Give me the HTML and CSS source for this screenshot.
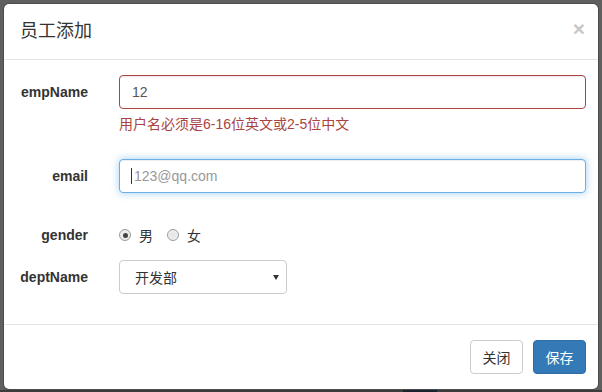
FILE: index.html
```html
<!DOCTYPE html>
<html lang="zh-CN">
<head>
<meta charset="utf-8">
<title>员工添加</title>
<link rel="stylesheet" href="styles.css">
</head>
<body>
<div class="modal">
  <div class="modal-header">
    <span class="close">×</span>
    <h4 class="modal-title">员工添加</h4>
  </div>
  <div class="modal-body">
    <form class="form">
      <div class="form-group has-error">
        <label class="control-label">empName</label>
        <div class="control">
          <input type="text" class="form-control" value="12">
          <span class="help-block">用户名必须是6-16位英文或2-5位中文</span>
        </div>
      </div>
      <div class="form-group">
        <label class="control-label">email</label>
        <div class="control">
          <div class="input-wrap">
            <input type="text" class="form-control focus" placeholder="123@qq.com">
          </div>
          <span class="help-block empty"></span>
        </div>
      </div>
      <div class="form-group">
        <label class="control-label">gender</label>
        <div class="control radios">
          <label class="radio-inline"><input type="radio" name="gender" checked><span>男</span></label>
          <label class="radio-inline"><input type="radio" name="gender"><span>女</span></label>
        </div>
      </div>
      <div class="form-group">
        <label class="control-label">deptName</label>
        <div class="control">
          <div class="select-wrap">
            <select class="form-select">
              <option>开发部</option>
              <option>测试部</option>
            </select>
          </div>
        </div>
      </div>
    </form>
  </div>
  <div class="modal-footer">
    <button type="button" class="btn btn-default">关闭</button>
    <button type="button" class="btn btn-primary">保存</button>
  </div>
</div>
<div class="backdrop-bottom"><div class="under-btn"></div></div>
</body>
</html>
```

FILE: styles.css
```css
* { box-sizing: border-box; }
html, body { margin: 0; padding: 0; height: 100%; overflow: hidden; }
body {
  background: #5f5f5f;
  font-family: "Liberation Sans", Arial, "Noto Sans CJK SC", sans-serif;
  font-size: 14px;
  line-height: 20px;
  color: #333;
  padding-top: 3px;
}
.modal {
  margin-left: 3px;
  width: 596px;
  height: 387px;
  background: #fff;
  border: 1px solid rgba(0,0,0,.2);
  border-radius: 6px;
  background-clip: padding-box;
}
.modal-header {
  height: 56px;
  padding: 15px 13px 15px 16px;
  border-bottom: 1px solid #e5e5e5;
}
.modal-title {
  margin: 0;
  font-size: 18px;
  line-height: 25px;
  font-weight: normal;
  color: #333;
}
.close {
  float: right;
  font-size: 21px;
  font-weight: bold;
  line-height: 1;
  color: #c8c8c8;
  margin-top: -1px;
}
.modal-body {
  padding: 15px 12px 15px 0;
}
.form-group {
  display: grid;
  grid-template-columns: 84px 1fr;
  column-gap: 31px;
  margin-bottom: 15px;
}
.control-label {
  text-align: right;
  font-weight: bold;
  padding-top: 7px;
  line-height: 20px;
  color: #333;
}
.form-control, .form-select {
  display: block;
  width: 100%;
  height: 34px;
  padding: 6px 12px;
  font-family: "Liberation Sans", Arial, "Noto Sans CJK SC", sans-serif;
  font-size: 14px;
  line-height: 20px;
  color: #555;
  background: #fff;
  border: 1px solid #ccc;
  border-radius: 4px;
  box-shadow: inset 0 1px 1px rgba(0,0,0,.075);
  outline: none;
}
.form-control::placeholder { color: #999; }
.has-error .form-control { border-color: #a94442; }
.has-error .help-block { color: #a94442; }
.help-block {
  display: block;
  margin-top: 5px;
  margin-bottom: 10px;
  font-family: "Liberation Sans", Arial, "Noto Sans CJK SC", sans-serif;
}
.help-block.empty { margin-top: 10px; margin-bottom: 0; height: 0; }
.form-control.focus {
  border-color: #66afe9;
  box-shadow: inset 0 1px 1px rgba(0,0,0,.075), 0 0 8px rgba(102,175,233,.6);
}
.input-wrap { position: relative; }
.input-wrap::after {
  content: "";
  position: absolute;
  left: 12px;
  top: 9px;
  width: 1px;
  height: 16px;
  background: #333;
}
.input-wrap .form-control { padding-left: 14px; }
.radios {
  display: flex;
  align-items: center;
  padding-top: 7px;
  height: 27px;
}
.radio-inline {
  display: flex;
  align-items: center;
  margin-right: 14px;
  font-family: "Noto Sans CJK SC", sans-serif;
  font-size: 14px;
  color: #333;
}
.radio-inline input {
  appearance: none;
  -webkit-appearance: none;
  width: 12px;
  height: 12px;
  margin: 0 8px 0 0;
  border: 1px solid #9a9a9a;
  border-radius: 50%;
  background: radial-gradient(circle, #e4e4e4 0%, #f4f4f4 100%);
  position: relative;
}
.radio-inline input:checked::after {
  content: "";
  position: absolute;
  left: 2.5px;
  top: 2.5px;
  width: 5px;
  height: 5px;
  border-radius: 50%;
  background: #444;
}
.select-wrap {
  position: relative;
  width: 168px;
}
.form-select {
  appearance: none;
  -webkit-appearance: none;
  padding-left: 15px;
  font-family: "Noto Sans CJK SC", sans-serif;
  color: #333;
  box-shadow: none;
}
.select-wrap::after {
  content: "";
  position: absolute;
  right: 8px;
  top: 15px;
  border-left: 3.5px solid transparent;
  border-right: 3.5px solid transparent;
  border-top: 5px solid #333;
}
.modal-footer {
  display: flex;
  justify-content: flex-end;
  gap: 10px;
  padding: 15px 12px 15px 15px;
  border-top: 1px solid #e5e5e5;
}
.btn {
  height: 34px;
  width: 53px;
  padding: 6px 0;
  font-family: "Noto Sans CJK SC", sans-serif;
  font-size: 14px;
  line-height: 20px;
  border: 1px solid transparent;
  border-radius: 4px;
}
.btn-default { color: #333; background: #fff; border-color: #ccc; }
.btn-primary { color: #fff; background: #337ab7; border-color: #2e6da4; }
.backdrop-bottom {
  height: 3px;
  background: #3c3c3c;
}
.under-btn {
  margin-left: 403px;
  width: 34px;
  height: 3px;
  background: #18222c;
}
```
